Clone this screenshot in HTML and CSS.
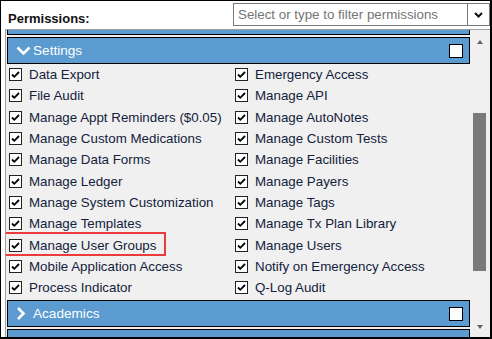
FILE: index.html
```html
<!DOCTYPE html>
<html>
<head>
<title>Permissions</title>
<link rel="stylesheet" href="styles.css">
</head>
<body>

<div class="frame">
  <div class="toolbar">
    <label class="perm-label">Permissions:</label>
    <div class="filter">
      <span class="filter-text">Select or type to filter permissions</span>
      <span class="filter-arrow">
        <svg width="9" height="6" viewBox="0 0 9 6"><path d="M1 1 L4.5 4.5 L8 1" fill="none" stroke="#111" stroke-width="2"/></svg>
      </span>
    </div>
  </div>

  <div class="list-box">
    <div class="list">
      <div class="group-head cut"></div>

      <div class="group-head">
        <svg class="chev" width="15" height="10" viewBox="0 0 15 10"><path d="M1.5 1.5 L7.5 7.5 L13.5 1.5" fill="none" stroke="#fff" stroke-width="2.6"/></svg>
        <span class="group-title">Settings</span>
        <span class="head-box"></span>
      </div>

      <div class="perm-grid">
        <div class="perm"><span class="box"></span>Data Export</div>
        <div class="perm"><span class="box"></span>Emergency Access</div>
        <div class="perm"><span class="box"></span>File Audit</div>
        <div class="perm"><span class="box"></span>Manage API</div>
        <div class="perm"><span class="box"></span>Manage Appt Reminders ($0.05)</div>
        <div class="perm"><span class="box"></span>Manage AutoNotes</div>
        <div class="perm"><span class="box"></span>Manage Custom Medications</div>
        <div class="perm"><span class="box"></span>Manage Custom Tests</div>
        <div class="perm"><span class="box"></span>Manage Data Forms</div>
        <div class="perm"><span class="box"></span>Manage Facilities</div>
        <div class="perm"><span class="box"></span>Manage Ledger</div>
        <div class="perm"><span class="box"></span>Manage Payers</div>
        <div class="perm"><span class="box"></span>Manage System Customization</div>
        <div class="perm"><span class="box"></span>Manage Tags</div>
        <div class="perm"><span class="box"></span>Manage Templates</div>
        <div class="perm"><span class="box"></span>Manage Tx Plan Library</div>
        <div class="perm marked"><span class="box"></span>Manage User Groups</div>
        <div class="perm"><span class="box"></span>Manage Users</div>
        <div class="perm"><span class="box"></span>Mobile Application Access</div>
        <div class="perm"><span class="box"></span>Notify on Emergency Access</div>
        <div class="perm"><span class="box"></span>Process Indicator</div>
        <div class="perm"><span class="box"></span>Q-Log Audit</div>
      </div>

      <div class="group-head">
        <svg class="chev" width="15" height="13" viewBox="0 0 15 13"><path d="M2 1 L7.5 6.5 L2 12" fill="none" stroke="#fff" stroke-width="2.6"/></svg>
        <span class="group-title">Academics</span>
        <span class="head-box"></span>
      </div>

      <div class="group-head"></div>
    </div>

    <div class="scrollbar">
      <div class="arrow-cell up"><span class="tri-up"></span></div>
      <div class="track"><div class="thumb"></div></div>
      <div class="arrow-cell down"><span class="tri-down"></span></div>
    </div>
  </div>
</div>

</body>
</html>
```

FILE: styles.css
```css
body {
  margin: 0;
  font-family: 'Liberation Sans', Arial, sans-serif;
  font-size: 13.33px;
  background: #fff;
}

.frame {
  width: 492px;
  height: 339px;
  box-sizing: border-box;
  border: 1px solid #000;
  border-right-width: 2px;
  border-bottom-width: 2px;
  overflow: hidden;
  display: flex;
  flex-direction: column;
  background: #fff;
}

.toolbar {
  height: 28px;
  flex-shrink: 0;
  display: flex;
}

.perm-label {
  font-weight: bold;
  font-size: 13px;
  color: #111;
  padding-left: 7px;
  padding-top: 10px;
}

.filter {
  margin-left: auto;
  margin-top: 2px;
  width: 257px;
  height: 23px;
  box-sizing: border-box;
  border: 1px solid #7a7a7a;
  display: flex;
  align-items: center;
  background: #fff;
}

.filter-text {
  flex: 1;
  color: #757575;
  padding-left: 4px;
}

.filter-arrow {
  width: 21px;
  height: 100%;
  border-left: 1px solid #7a7a7a;
  display: flex;
  align-items: center;
  justify-content: center;
}

.list-box {
  flex: 1;
  min-height: 0;
  margin-left: 4px;
  border-top: 1px solid #a0a0a0;
  border-left: 1px solid #a0a0a0;
  background: #f0f0f0;
  display: flex;
  overflow: hidden;
}

.list {
  width: 463px;
  padding-left: 1px;
  flex-shrink: 0;
}

.group-head {
  height: 27px;
  box-sizing: border-box;
  border: 1px solid #000;
  background: #5b9bd0;
  display: flex;
  align-items: center;
  padding: 0 6px 0 8px;
  margin-bottom: 2px;
  color: #fff;
}

.group-head.cut {
  height: 5px;
  border-top: none;
}

.chev {
  flex-shrink: 0;
}

.group-title {
  margin-left: 2px;
  flex: 1;
  font-size: 13.6px;
}

.head-box {
  width: 14px;
  height: 14px;
  box-sizing: border-box;
  border: 1px solid #000;
  background: #fff;
}

.perm-grid {
  display: grid;
  grid-template-columns: 226px 1fr;
  grid-auto-rows: 21.3px;
  margin-top: -2px;
  margin-bottom: 2px;
}

.perm {
  display: flex;
  align-items: center;
  padding-left: 2px;
  color: #13223c;
  white-space: nowrap;
  position: relative;
}

.box {
  width: 13px;
  height: 13px;
  box-sizing: border-box;
  border: 1px solid #222;
  background: #fff url("data:image/svg+xml,%3Csvg xmlns='http://www.w3.org/2000/svg' width='11' height='11' viewBox='0 0 11 11'%3E%3Cpath d='M2 5.5 L4.3 7.8 L9 3' fill='none' stroke='%23000' stroke-width='1.8'/%3E%3C/svg%3E") center no-repeat;
  margin-right: 7px;
  flex-shrink: 0;
}

/* red highlight round one item */
.perm.marked::after {
  content: '';
  position: absolute;
  left: -4px;
  top: -2px;
  width: 163px;
  height: 24px;
  box-sizing: border-box;
  border: 2px solid #ec3b3b;
}

.scrollbar {
  width: 19px;
  display: flex;
  flex-direction: column;
  background: #f0f0f0;
}

.arrow-cell {
  display: flex;
  align-items: center;
  justify-content: center;
}

.arrow-cell.up {
  height: 23px;
}

.arrow-cell.down {
  height: 21px;
}

.tri-up {
  border-left: 3.5px solid transparent;
  border-right: 3.5px solid transparent;
  border-bottom: 4px solid #606060;
}

.tri-down {
  border-left: 3.5px solid transparent;
  border-right: 3.5px solid transparent;
  border-top: 4px solid #606060;
}

.track {
  flex: 1;
  display: flex;
  justify-content: center;
}

.thumb {
  width: 13px;
  height: 158px;
  margin-top: 60px;
  background: #7a7a7a;
}
```
